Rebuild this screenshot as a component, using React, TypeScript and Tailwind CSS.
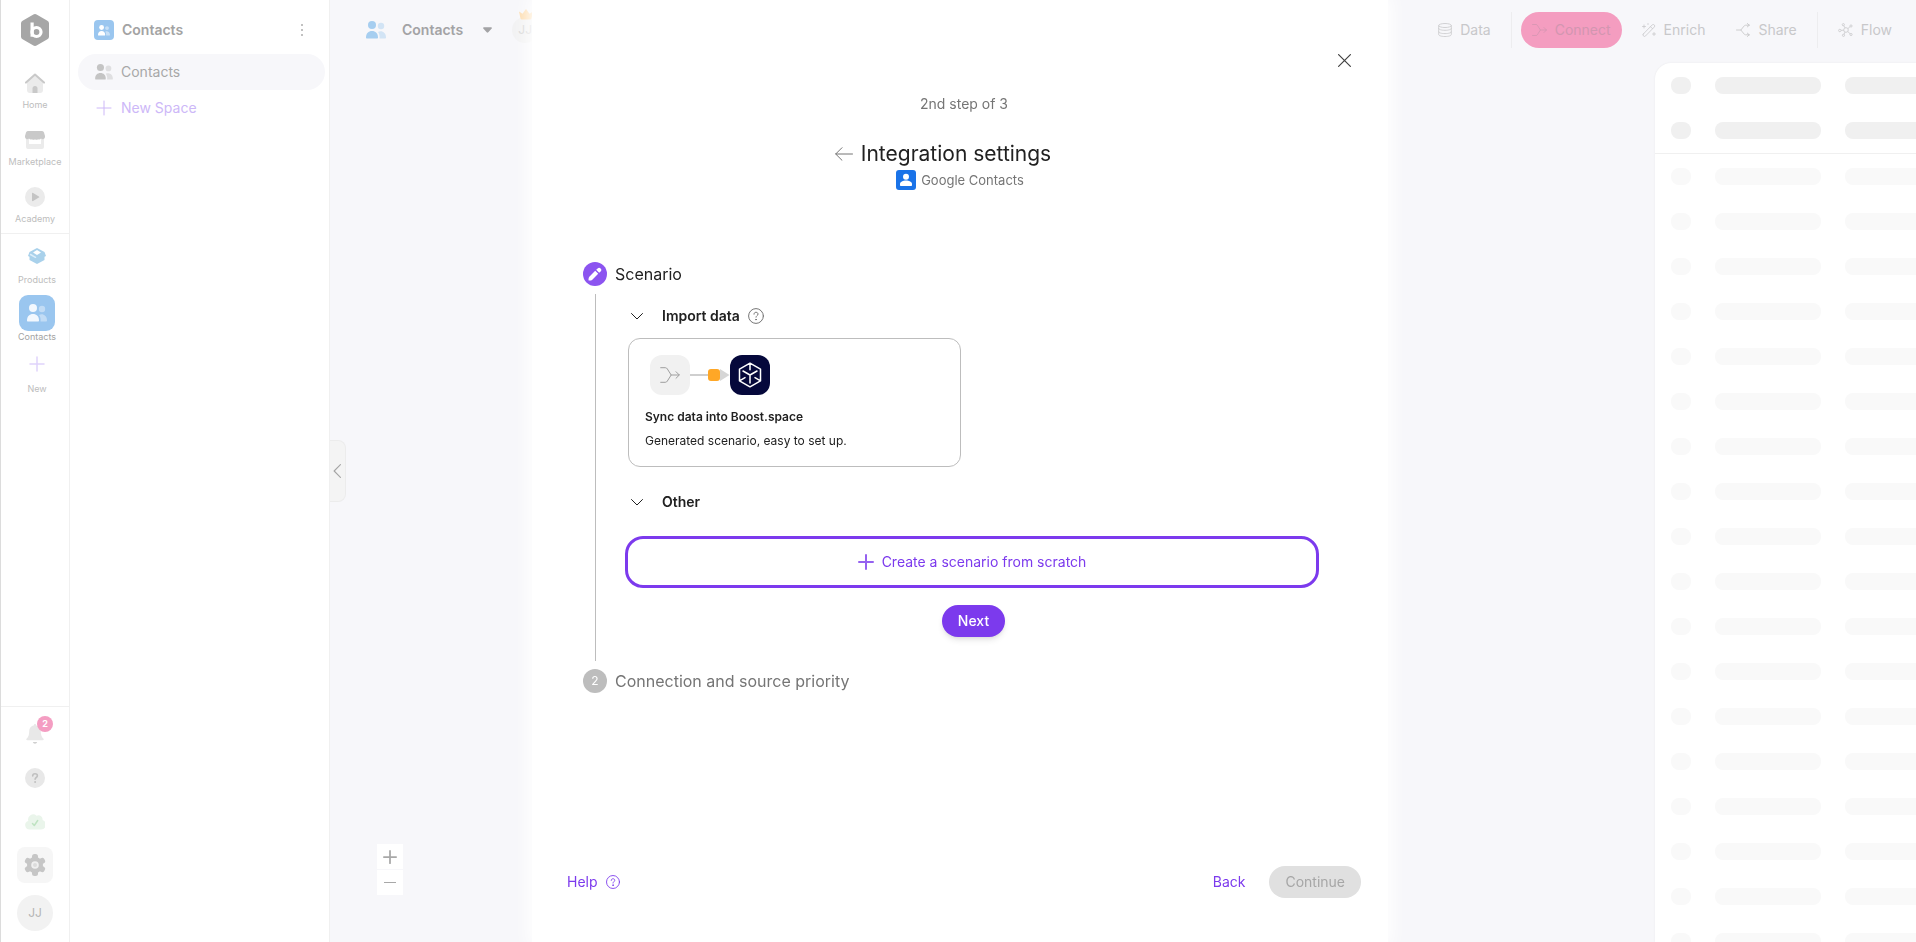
import type { ReactNode } from 'react';
import { clsx } from 'clsx';

type IconProps = { className?: string };

/* ---------- Icons ---------- */

function LogoIcon() {
  return (
    <svg viewBox="0 0 28 32" className="h-8 w-7" aria-hidden="true">
      <path d="M12.4.5a3 3 0 0 1 3.2 0l10.8 6.2A3 3 0 0 1 28 9.300v13.400a3 3 0 0 1-1.600 2.600l-10.800 6.200a3 3 0 0 1-3.200 0L1.600 25.300A3 3 0 0 1 0 22.700V9.300a3 3 0 0 1 1.600-2.600z" fill="#a6a6a6" />
      <path d="M11.100 8.500v14.200" stroke="#fff" strokeWidth="3.200" />
      <circle cx="15.500" cy="18" r="4.500" fill="none" stroke="#fff" strokeWidth="3.200" />
    </svg>
  );
}

function HomeIcon() {
  return (
    <svg viewBox="0 0 20 20" className="h-5 w-5" fill="none" aria-hidden="true">
      <path d="M2 9l8-7 8 7v8a3 3 0 0 1-3 3H5a3 3 0 0 1-3-3z" fill="#ebebeb" />
      <path d="M7.500 20v-4.500a2.500 2.500 0 0 1 5 0V20z" fill="#c9c9c9" />
      <path d="M1 9.600l9-8.100 9 8.100" stroke="#c9c9c9" strokeWidth="2" strokeLinecap="round" strokeLinejoin="round" />
    </svg>
  );
}

function StoreIcon() {
  return (
    <svg viewBox="0 0 20 20" className="h-5 w-5" aria-hidden="true">
      <path d="M1 6h18v11a2 2 0 0 1-2 2H3a2 2 0 0 1-2-2zm3 2v6h12V8z" fill="#ebebeb" fillRule="evenodd" />
      <path d="M3 1h14a2 2 0 0 1 2 1.500L20 6v1a2.300 2.300 0 0 1-4 1.500 2.300 2.300 0 0 1-3 .7 2.500 2.500 0 0 1-3 0 2.500 2.500 0 0 1-3 0 2.300 2.300 0 0 1-3-.7A2.300 2.300 0 0 1 0 7V6l1-3.500A2 2 0 0 1 3 1z" fill="#c9c9c9" />
    </svg>
  );
}

function AcademyIcon() {
  return (
    <svg viewBox="0 0 20 20" className="h-5 w-5" aria-hidden="true">
      <circle cx="10" cy="10" r="10" fill="#ebebeb" />
      <path d="M7 6.500c0-.6.600-.9 1.100-.6l5.800 3.500c.5.300.5.900 0 1.200l-5.800 3.500c-.5.300-1.100 0-1.100-.6z" fill="#c4c4c4" />
    </svg>
  );
}

function BoxIcon() {
  return (
    <svg viewBox="0 0 18 16" className="h-4 w-[18px]" aria-hidden="true">
      <path d="M9 0l7.500 4 1.500 4-1.500.8V12L9 16l-7.500-4V8.800L0 8l1.500-4z" fill="#a9d1eb" />
      <path d="M9 2l4 2.500L9 7 5 4.500z" fill="#fff" />
      <path d="M2.500 6.500l5 2.800" stroke="#dceefa" strokeWidth="1.500" strokeLinecap="round" />
    </svg>
  );
}

function PeopleIcon({ className }: IconProps) {
  return (
    <svg viewBox="0 0 20 18" className={className} fill="currentColor" aria-hidden="true">
      <circle cx="6" cy="4" r="4" />
      <path d="M0 16.500C0 12.300 2.500 10 6 10s6 2.300 6 6.500c0 .6-.4 1-1 1H1c-.6 0-1-.4-1-1z" />
      <g opacity=".45">
        <circle cx="15" cy="5" r="3.200" />
        <path d="M13.500 17.500c.4-2.800-.3-5-1.500-6.600 4-1.700 8 .8 8 5.600 0 .6-.4 1-1 1z" />
      </g>
    </svg>
  );
}

function PlusIcon({ className }: IconProps) {
  return (
    <svg viewBox="0 0 16 16" className={className} fill="none" stroke="currentColor" strokeLinecap="round" aria-hidden="true">
      <path d="M8 1v14M1 8h14" />
    </svg>
  );
}

function BellIcon() {
  return (
    <svg viewBox="0 0 20 20" className="h-5 w-5" aria-hidden="true">
      <path d="M10 0c.8 0 1 .6 1 1.200 2.800.5 4.800 2.800 4.800 5.800 0 4 .7 5.800 2.500 7.500.7.700.5 1.800-.6 1.800H2.300c-1.100 0-1.300-1.100-.6-1.800C3.500 12.800 4.200 11 4.200 7c0-3 2-5.300 4.800-5.800C9 .6 9.200 0 10 0z" fill="#e8e8e8" />
      <path d="M7.800 18h4.400a2.300 2.300 0 0 1-4.400 0z" fill="#cfcfcf" />
    </svg>
  );
}

function HelpSolidIcon() {
  return (
    <svg viewBox="0 0 20 20" className="h-5 w-5" fill="none" aria-hidden="true">
      <circle cx="10" cy="10" r="10" fill="#e8e8e8" />
      <path d="M7.700 7.900c0-1.300 1-2.100 2.300-2.100s2.400.8 2.400 2c0 1.700-2.300 1.700-2.300 3.400" stroke="#c0c0c0" strokeWidth="1.600" strokeLinecap="round" />
      <circle cx="10.100" cy="13.900" r="1" fill="#c0c0c0" />
    </svg>
  );
}

function HelpIcon({ className }: IconProps) {
  return (
    <svg viewBox="0 0 16 16" className={className} fill="none" stroke="currentColor" strokeLinecap="round" aria-hidden="true">
      <circle cx="8" cy="8" r="7.400" />
      <path d="M6 6.200C6 5 6.800 4.300 8 4.300s2 .7 2 1.800c0 1.500-2 1.500-2 3.100" />
      <circle cx="8" cy="11.600" r=".4" fill="currentColor" />
    </svg>
  );
}

function CloudIcon() {
  return (
    <svg viewBox="0 0 20 16" className="h-4 w-5" fill="none" aria-hidden="true">
      <path d="M4.500 15.500a4.400 4.400 0 0 1-1.200-8.600A5 5 0 0 1 11.500 1.800 4 4 0 0 1 17.500 6a4.900 4.900 0 0 1-2 9.500z" fill="#eaf5eb" />
      <path d="M7.500 9.500l1.800 2 3.400-5" stroke="#bfe3c2" strokeWidth="1.500" strokeLinecap="round" strokeLinejoin="round" />
    </svg>
  );
}

function GearIcon() {
  const teeth = [0, 60, 120, 180, 240, 300];
  return (
    <svg viewBox="0 0 22 22" className="h-[22px] w-[22px]" aria-hidden="true">
      {teeth.map((deg) => (
        <rect key={deg} x="8" y="0" width="6" height="8" rx="2.500" fill="#c6c6c6" transform={`rotate(${deg} 11 11)`} />
      ))}
      <circle cx="11" cy="11" r="8" fill="#c6c6c6" />
      <circle cx="11" cy="11" r="3.800" fill="#f0f0f0" />
      <circle cx="11" cy="11" r="2" fill="#dcdcdc" />
    </svg>
  );
}

function ChevronIcon({ className }: IconProps) {
  return (
    <svg viewBox="0 0 12 7" className={className} fill="none" stroke="currentColor" strokeLinecap="round" strokeLinejoin="round" aria-hidden="true">
      <path d="M.5.500L6 6 11.500.500" />
    </svg>
  );
}

function MergeIcon({ className }: IconProps) {
  return (
    <svg viewBox="0 0 20 16" className={className} fill="none" stroke="currentColor" strokeLinecap="round" strokeLinejoin="round" aria-hidden="true">
      <path d="M.7.700h4.600c1 0 1.500.4 2 1.200L11.200 8l-3.900 6.100c-.5.800-1 1.200-2 1.200H.7M11.200 8h8M16 4.700L19.300 8 16 11.300" />
    </svg>
  );
}

function DatabaseIcon() {
  return (
    <svg viewBox="0 0 14 14" className="h-[14px] w-[14px]" fill="none" stroke="currentColor" strokeWidth=".8" aria-hidden="true">
      <path d="M.7 2.500v9c0 1.200 2.600 2 6.300 2s6.300-.8 6.300-2v-9M.7 5.300c0 1.200 2.600 2 6.300 2s6.300-.8 6.300-2M.7 8.600c0 1.200 2.600 2 6.300 2s6.300-.8 6.300-2" />
      <ellipse cx="7" cy="2.500" rx="6.300" ry="2" />
    </svg>
  );
}

function WandIcon() {
  return (
    <svg viewBox="0 0 14 14" className="h-[14px] w-[14px]" fill="none" stroke="currentColor" strokeWidth=".8" strokeLinecap="round" aria-hidden="true">
      <path d="M1.300 11l9-9.200a1.500 1.500 0 0 1 2.100 2.100l-9 9.200A1.500 1.500 0 0 1 1.300 11zM8.500 3.700l2 2M2 2v3M.5 3.500h3M12 9.500v3M10.500 11h3M6 .5v1" />
    </svg>
  );
}

function ShareIcon() {
  return (
    <svg viewBox="0 0 14 14" className="h-[14px] w-[14px]" fill="none" stroke="currentColor" strokeWidth=".9" strokeLinecap="round" strokeLinejoin="round" aria-hidden="true">
      <path d="M.5 7h4.300M13.300 2.200H9.500c-.6 0-1 .2-1.300.7L4.800 7l3.400 4.100c.3.500.7.700 1.300.7h3.800M11.300.5l2 1.700-2 1.700M11.300 10.100l2 1.700-2 1.700" />
    </svg>
  );
}

function FlowIcon() {
  return (
    <svg viewBox="0 0 15 14" className="h-[14px] w-[15px]" fill="none" stroke="currentColor" strokeWidth=".8" aria-hidden="true">
      <circle cx="8" cy="7" r="2.300" />
      <circle cx="1.800" cy="7.500" r="1.200" />
      <circle cx="5.300" cy="1.700" r="1.100" />
      <circle cx="13" cy="3" r="1.100" />
      <circle cx="13" cy="11.500" r="1.100" />
      <circle cx="5.500" cy="12.300" r="1.100" />
      <path d="M3 7.300l2.700-.1M5.800 2.700l1.200 2.200M12.100 3.600L9.900 5.600M12.200 10.800L9.700 8.500M6 11.300l1-2.200" />
    </svg>
  );
}

function CrownIcon() {
  return (
    <svg viewBox="0 0 14 11" className="h-[11px] w-[14px]" aria-hidden="true">
      <path d="M0 2.500l3.500 2.300L7 0l3.500 4.800L14 2.500l-1.500 7a1.500 1.500 0 0 1-1.500 1H3a1.500 1.500 0 0 1-1.500-1z" fill="#fddcae" />
    </svg>
  );
}

function CloseIcon() {
  return (
    <svg viewBox="0 0 13 13" className="h-[13px] w-[13px]" fill="none" stroke="currentColor" strokeWidth="1.200" strokeLinecap="round" aria-hidden="true">
      <path d="M.6.600l11.800 11.800M12.400.600L.6 12.400" />
    </svg>
  );
}

function ArrowLeftIcon() {
  return (
    <svg viewBox="0 0 18 14" className="h-[14px] w-[18px]" fill="none" stroke="currentColor" strokeLinecap="round" strokeLinejoin="round" aria-hidden="true">
      <path d="M17.500 7H.7M7 .700L.7 7 7 13.300" />
    </svg>
  );
}

function GoogleContactsIcon() {
  return (
    <svg viewBox="0 0 20 20" className="h-5 w-5" aria-hidden="true">
      <rect width="20" height="20" rx="3" fill="#1a73e8" />
      <circle cx="10" cy="6.800" r="3" fill="#fff" />
      <path d="M4 15v-1c0-2.200 3-3.500 6-3.500s6 1.300 6 3.500v1c0 .6-.4 1-1 1H5c-.6 0-1-.4-1-1z" fill="#fff" />
    </svg>
  );
}

function PencilIcon() {
  return (
    <svg viewBox="0 0 14 14" className="h-[14px] w-[14px]" fill="#fff" aria-hidden="true">
      <path d="M1.300 9.700l5.900-5.900 3 3-5.900 5.900c-.6.600-2.400.9-3.200.9-.3 0-.6-.3-.6-.6 0-.8.200-2.700.8-3.300z" />
      <path d="M8.200 2.800l1.400-1.400a2.100 2.100 0 0 1 3 3l-1.400 1.400z" />
    </svg>
  );
}

function BoostCubeIcon() {
  return (
    <svg viewBox="0 0 24 26" className="h-[26px] w-6" fill="none" stroke="#fff" strokeWidth="1.500" strokeLinecap="round" strokeLinejoin="round" aria-hidden="true">
      <path d="M12 1.200l10.500 6v11.600L12 24.800l-10.500-6V7.200zM12 1.200v6.500M12 21v-8L5 9M12 13l7-4M1.500 18.800l5.500-3.200M22.500 18.800L17 15.600" />
    </svg>
  );
}

/* ---------- Left rail ---------- */

type RailItemProps = {
  label: string;
  icon: ReactNode;
  active?: boolean;
  compact?: boolean;
};

function RailItem({ label, icon, active, compact }: RailItemProps) {
  return (
    <a href="#" className="flex h-[57px] w-full flex-col items-center">
      <span
        className={clsx(
          'flex w-9 items-center justify-center rounded-[9px]',
          compact ? 'h-8' : 'h-9',
          active && 'bg-[#9ac6ef] text-[#f3f8fe]',
        )}
      >
        {icon}
      </span>
      <span className={clsx('text-[9px] leading-3', active ? 'text-[#a3a3a3]' : 'text-[#bdbdbd]')}>{label}</span>
    </a>
  );
}

function Rail() {
  return (
    <nav className="flex w-[70px] shrink-0 flex-col border-x border-l-[#dcdcdc] border-r-[#f0f0f0] bg-white" aria-label="Main">
      <a href="#" className="flex justify-center pt-[14px]" aria-label="Boost.space">
        <LogoIcon />
      </a>
      <div className="mt-[21px] h-[167px] border-b border-[#f0f0f0]">
        <RailItem label="Home" icon={<HomeIcon />} compact />
        <RailItem label="Marketplace" icon={<StoreIcon />} compact />
        <RailItem label="Academy" icon={<AcademyIcon />} compact />
      </div>
      <div className="flex flex-1 flex-col pt-1 pl-1">
        <RailItem label="Products" icon={<BoxIcon />} />
        <RailItem label="Contacts" icon={<PeopleIcon className="h-[18px] w-5" />} active />
        <button type="button" className="flex flex-col items-center text-[#e0d3fb]">
          <span className="flex h-6 items-center">
            <PlusIcon className="h-4 w-4 stroke-[1.500]" />
          </span>
          <span className="mt-[5px] text-[9px] leading-4 text-[#bdbdbd]">New</span>
        </button>
      </div>
      <div className="flex flex-col items-center gap-2 border-t border-[#f0f0f0] pt-[9px] pb-[11px]">
        <button type="button" className="relative flex h-9 w-9 items-center justify-center" aria-label="Notifications">
          <BellIcon />
          <span className="absolute top-0 right-0 flex h-4 w-4 items-center justify-center rounded-full bg-[#f49dc2] text-[9px] font-bold text-white">
            2
          </span>
        </button>
        <button type="button" className="flex h-9 w-9 items-center justify-center" aria-label="Help">
          <HelpSolidIcon />
        </button>
        <button type="button" className="flex h-[35px] w-9 items-center justify-center" aria-label="Sync status">
          <CloudIcon />
        </button>
        <button type="button" className="flex h-9 w-9 items-center justify-center rounded-lg bg-[#f6f6f6]" aria-label="Settings">
          <GearIcon />
        </button>
        <button type="button" className="mt-1 flex h-9 w-9 items-center justify-center rounded-full bg-[#f2f2f2] text-xs text-[#b5b5b5]">
          JJ
        </button>
      </div>
    </nav>
  );
}

/* ---------- Spaces panel ---------- */

function SpacesPanel() {
  return (
    <aside className="flex w-[260px] shrink-0 flex-col border-r border-[#f0f0f0] bg-white pr-1 pl-2 text-sm">
      <header className="flex h-[54px] items-center pt-[10px] pr-[18px] pb-1 pl-4">
        <span className="flex h-5 w-5 items-center justify-center rounded bg-[#9ac6ef] text-white">
          <PeopleIcon className="h-[11px] w-3" />
        </span>
        <h2 className="ml-2 flex-1 font-semibold text-[#a3a3a3]">Contacts</h2>
        <button type="button" className="flex flex-col gap-[3px] p-1" aria-label="Space options">
          <span className="h-[2px] w-[2px] rounded-full bg-[#adadad]" />
          <span className="h-[2px] w-[2px] rounded-full bg-[#adadad]" />
          <span className="h-[2px] w-[2px] rounded-full bg-[#adadad]" />
        </button>
      </header>
      <a href="#" className="flex h-9 items-center gap-2 rounded-full bg-[#f7f7fa] pl-[17px] text-[#a8a8a8]">
        <PeopleIcon className="h-4 w-[18px] text-[#c4c4c4]" />
        Contacts
      </a>
      <button type="button" className="flex h-9 items-center gap-2 pl-[17px] text-[#cdb8f8]">
        <span className="flex w-[18px] justify-center">
          <PlusIcon className="h-4 w-4" />
        </span>
        New Space
      </button>
    </aside>
  );
}

/* ---------- Workspace ---------- */

type ToolButtonProps = {
  label: string;
  icon: ReactNode;
  active?: boolean;
};

function ToolButton({ label, icon, active }: ToolButtonProps) {
  return (
    <button
      type="button"
      className={clsx(
        'flex h-9 items-center gap-2 rounded-full px-[11px]',
        active ? 'bg-[#f49dc0] text-[#d296b0]' : 'text-[#c8c8ca]',
      )}
    >
      {icon}
      {label}
    </button>
  );
}

function Toolbar() {
  return (
    <header className="flex h-[60px] shrink-0 items-center justify-between pr-[13px] pl-9 text-sm">
      <div className="flex items-center">
        <PeopleIcon className="h-[18px] w-5 text-[#a6cef0]" />
        <h1 className="ml-4 font-semibold text-[#a3a3a5]">Contacts</h1>
        <button type="button" className="ml-[14px] p-[6px]" aria-label="Switch space">
          <svg viewBox="0 0 9 6" className="h-[6px] w-[9px]" fill="#a3a3a5" aria-hidden="true">
            <path d="M1 .300h7c.9 0 1.200.8.700 1.300L5.300 5.300a1.100 1.100 0 0 1-1.600 0L.3 1.600C-.2 1.100.1.300 1 .300z" />
          </svg>
        </button>
        <div className="relative ml-[14px] flex h-[26px] w-[26px] items-center justify-center rounded-full bg-[#f2f2f3] text-xs text-[#d5d5d5]">
          <span className="absolute -top-2 left-[7px]">
            <CrownIcon />
          </span>
          JJ
        </div>
      </div>
      <div className="flex items-center gap-[9px]">
        <ToolButton label="Data" icon={<DatabaseIcon />} />
        <span className="h-9 w-px bg-[#ededef]" />
        <ToolButton label="Connect" icon={<MergeIcon className="h-3 w-[15px]" />} active />
        <ToolButton label="Enrich" icon={<WandIcon />} />
        <ToolButton label="Share" icon={<ShareIcon />} />
        <span className="h-9 w-px bg-[#ededef]" />
        <ToolButton label="Flow" icon={<FlowIcon />} />
      </div>
    </header>
  );
}

function SkeletonRow({ strong }: { strong?: boolean }) {
  const tone = strong ? 'bg-[#f0f0f0]' : 'bg-[#f9f9f9]';
  return (
    <div className="flex h-[45px] shrink-0 items-center gap-6 pl-4">
      <span className={clsx('h-[17px] w-5 shrink-0 rounded-lg', tone)} />
      <span className={clsx('h-[17px] w-[106px] shrink-0 rounded-lg', tone)} />
      <span className={clsx('h-[17px] w-[106px] shrink-0 rounded-lg', tone)} />
    </div>
  );
}

function Workspace() {
  return (
    <main className="relative flex min-w-0 flex-1 flex-col bg-[#f7f7fa]">
      <button
        type="button"
        className="absolute top-[440px] left-0 flex h-[62px] w-4 items-center justify-center rounded-r-lg border border-l-0 border-[#ececec] bg-[#f4f4f4] pr-[2px] text-[#a6a6a6]"
        aria-label="Collapse panel"
      >
        <ChevronIcon className="h-2 w-[14px] shrink-0 rotate-90" />
      </button>
      <Toolbar />
      <div className="flex min-h-0 flex-1 pt-[3px]">
        <div className="flex flex-1 items-end pb-[47px] pl-[47px]">
          <div className="flex w-[26px] flex-col gap-px text-[#a8a8a8]">
            <button type="button" className="flex h-[25px] items-center justify-center bg-white" aria-label="Zoom in">
              <PlusIcon className="h-[14px] w-[14px] stroke-2" />
            </button>
            <button type="button" className="flex h-[25px] items-center justify-center bg-white" aria-label="Zoom out">
              <span className="h-px w-3 bg-[#a8a8a8]" />
            </button>
          </div>
        </div>
        <div className="w-[261px] shrink-0 overflow-hidden rounded-tl-2xl bg-white shadow-[0_0_2px_#e8e8ea]" aria-hidden="true">
          <div className="border-b border-[#f0f0f0]">
            <SkeletonRow strong />
            <SkeletonRow strong />
          </div>
          {Array.from({ length: 18 }, (_, i) => (
            <SkeletonRow key={i} />
          ))}
        </div>
      </div>
    </main>
  );
}

/* ---------- Integration dialog ---------- */

function SectionHeading({ title, help }: { title: string; help?: boolean }) {
  return (
    <div className="flex h-6 items-center text-[#212121]">
      <button type="button" className="flex w-[34px] items-center pl-[3px]" aria-label={`Toggle ${title}`}>
        <ChevronIcon className="h-[7px] w-3" />
      </button>
      <h3 className="text-sm font-semibold">{title}</h3>
      {help && <HelpIcon className="ml-2 h-4 w-4 text-[#757575]" />}
    </div>
  );
}

function ScenarioCard() {
  return (
    <button
      type="button"
      className="mt-[10px] flex h-[129px] w-[333px] flex-col items-start rounded-xl border border-[#bdbdbd] px-4 pt-4 text-left text-xs text-[#212121]"
    >
      <span className="flex items-center pl-[5px]">
        <span className="flex h-10 w-10 items-center justify-center rounded-xl bg-[#f1f1f1] text-[#9e9e9e]">
          <MergeIcon className="h-4 w-5" />
        </span>
        <span className="h-[2px] w-[18px] bg-[#cfcfcf]" />
        <span className="h-3 w-3 rounded-[3px] bg-[#ffa726]" />
        <svg viewBox="0 0 10 12" className="h-3 w-[10px]" fill="#d6d6d6" aria-hidden="true">
          <path d="M0 0l9.500 6L0 12z" />
        </svg>
        <span className="flex h-10 w-10 items-center justify-center rounded-xl bg-[#05083b]">
          <BoostCubeIcon />
        </span>
      </span>
      <span className="mt-[14px] leading-4 font-semibold">Sync data into Boost.space</span>
      <span className="mt-2 leading-4">Generated scenario, easy to set up.</span>
    </button>
  );
}

function IntegrationDialog() {
  return (
    <div className="fixed inset-0 flex justify-center pl-1">
      <section
        role="dialog"
        aria-labelledby="dialog-title"
        className="flex w-full max-w-[856px] flex-col bg-white pb-11 shadow-[0_0_16px_4px_#fff]"
      >
        <div className="flex justify-end pt-[46px] pr-[30px]">
          <button type="button" className="flex h-7 w-7 items-center justify-center text-[#424242]" aria-label="Close">
            <CloseIcon />
          </button>
        </div>

        <header className="flex flex-col items-center pt-5 text-[#757575]">
          <p className="pl-2 text-sm leading-5">2nd step of 3</p>
          <div className="mt-6 flex h-8 items-center gap-2 pr-[34px]">
            <button type="button" aria-label="Previous step">
              <ArrowLeftIcon />
            </button>
            <h2 id="dialog-title" className="text-[21px] text-[#212121]">Integration settings</h2>
          </div>
          <p className="flex items-center gap-[5px] text-[13px] leading-5">
            <GoogleContactsIcon />
            Google Contacts
          </p>
        </header>

        <ol className="mt-[72px] pr-[69px] pl-[51px]">
          <li>
            <div className="flex h-6 items-center gap-2">
              <span className="flex h-6 w-6 items-center justify-center rounded-full bg-[#8c54f0]">
                <PencilIcon />
              </span>
              <span className="text-base text-[#212121]">Scenario</span>
            </div>
            <div className="my-2 ml-3 border-l border-[#bdbdbd] pt-[10px] pb-6 pl-8">
              <SectionHeading title="Import data" help />
              <ScenarioCard />
              <div className="mt-[23px]">
                <SectionHeading title="Other" />
              </div>
              <div className="-ml-[3px] pt-[22px]">
                <button
                  type="button"
                  className="flex h-[52px] w-full items-center justify-center gap-2 rounded-[18px] border-3 border-[#7c3aed] text-sm text-[#7c3aed]"
                >
                  <PlusIcon className="h-4 w-4 stroke-2 text-[#9561f0]" />
                  Create a scenario from scratch
                </button>
              </div>
              <div className="flex justify-center pt-[17px]">
                <button type="button" className="h-8 rounded-full bg-[#7c3aed] px-4 text-sm font-medium text-white shadow-md">
                  Next
                </button>
              </div>
            </div>
          </li>
          <li className="flex h-6 items-center gap-2">
            <span className="flex h-6 w-6 items-center justify-center rounded-full bg-[#bdbdbd] text-xs text-white">2</span>
            <span className="text-base text-[#757575]">Connection and source priority</span>
          </li>
        </ol>

        <footer className="mt-auto flex items-center pr-[27px] pl-[35px] text-sm text-[#7c3aed]">
          <a href="#" className="flex items-center gap-2">
            Help
            <HelpIcon className="h-[14px] w-[14px]" />
          </a>
          <button type="button" className="ml-auto h-8 px-2">
            Back
          </button>
          <button type="button" disabled className="ml-4 h-8 rounded-full bg-[#e0e0e0] px-4 text-[#a6a6a6]">
            Continue
          </button>
        </footer>
      </section>
    </div>
  );
}

export default function App() {
  return (
    <div className="flex h-screen overflow-hidden font-['Inter','Liberation_Sans',sans-serif]">
      <Rail />
      <SpacesPanel />
      <Workspace />
      <IntegrationDialog />
    </div>
  );
}
